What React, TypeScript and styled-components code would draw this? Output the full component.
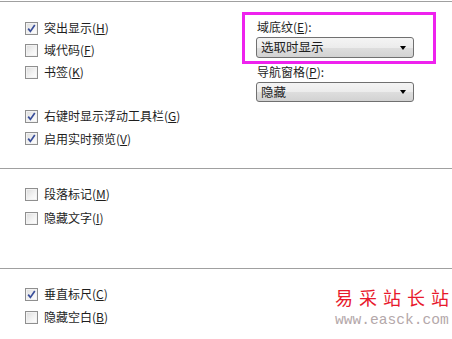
import { createGlobalStyle, styled } from "styled-components";

const GlobalStyle = createGlobalStyle`
  html, body {
    margin: 0;
    padding: 0;
    background: #ffffff;
  }
  body {
    font-family: "Noto Sans CJK SC", "Liberation Sans", sans-serif;
    font-size: 12px;
    color: #1e1e1e;
  }
`;

const Page = styled.div`
  position: relative;
  width: 452px;
  height: 339px;
  overflow: hidden;
  background: #fff;
  padding-top: 1px;
  box-sizing: border-box;
`;

const Section = styled.div<{ $height: number; $top: number }>`
  border-top: 1px solid #a0a0a0;
  height: ${(p) => p.$height}px;
  box-sizing: border-box;
  padding-top: ${(p) => p.$top}px;
  padding-left: 25px;
  display: flex;
`;

const Column = styled.div<{ $width?: number }>`
  display: flex;
  flex-direction: column;
  width: ${(p) => (p.$width ? `${p.$width}px` : "auto")};
`;

const Row = styled.label<{ $height?: number }>`
  display: flex;
  align-items: center;
  height: ${(p) => p.$height ?? 22}px;
  gap: 6px;
  white-space: nowrap;
  line-height: 1;
`;

const Spacer = styled.div<{ $h: number }>`
  height: ${(p) => p.$h}px;
`;

const Box = styled.span`
  width: 11px;
  height: 11px;
  border: 1px solid #8f8f8f;
  background: linear-gradient(135deg, #dcdcdc 0%, #f4f4f4 60%, #ffffff 100%);
  box-shadow: inset 0 0 0 1px #f2f2f2;
  display: flex;
  align-items: center;
  justify-content: center;
  flex-shrink: 0;
`;

const Key = styled.span`
  text-decoration: underline;
  text-underline-offset: 1px;
`;

const Right = styled.div`
  display: flex;
  flex-direction: column;
`;

const FieldLabel = styled.div`
  height: 20px;
  display: flex;
  align-items: center;
  padding-left: 1px;
  line-height: 1;
`;

const Select = styled.div<{ $h: number }>`
  width: 158px;
  height: ${(p) => p.$h}px;
  box-sizing: border-box;
  border: 1px solid #707070;
  border-radius: 3px;
  background: linear-gradient(#f4f4f4 0%, #ececec 50%, #dedede 51%, #d2d2d2 100%);
  display: flex;
  align-items: center;
  justify-content: space-between;
  padding: 0 7px 0 4px;
  font-size: 12.5px;
  line-height: 1;
`;

const Arrow = styled.span`
  width: 0;
  height: 0;
  border-left: 3.5px solid transparent;
  border-right: 3.5px solid transparent;
  border-top: 4px solid #000;
`;

const Highlight = styled.div`
  position: absolute;
  left: 242px;
  top: 12px;
  width: 194px;
  height: 52px;
  box-sizing: border-box;
  border: 3px solid #ee22ee;
  pointer-events: none;
`;

const Watermark = styled.div`
  position: absolute;
  left: 335px;
  top: 284px;
  width: 117px;
  display: flex;
  flex-direction: column;
  align-items: flex-start;
`;

const MarkTitle = styled.div`
  color: #e8192c;
  font-family: "Noto Sans CJK SC", serif;
  font-size: 18px;
  line-height: 26px;
  white-space: nowrap;
  display: flex;
  gap: 6px;
`;

const MarkUrl = styled.div`
  color: #b4a8aa;
  font-family: "Liberation Mono", monospace;
  font-size: 14.6px;
  line-height: 16px;
  white-space: nowrap;
  margin-top: 2px;
`;

const Tick = () => (
  <svg width="9" height="9" viewBox="0 0 9 9">
    <path d="M1.2 4.6 L3.4 7.4 L7.8 1" fill="none" stroke="#3a4f9a" strokeWidth="1.7" />
  </svg>
);

function Check({
  checked,
  label,
  k,
  h,
}: {
  checked?: boolean;
  label: string;
  k: string;
  h?: number;
}) {
  return (
    <Row $height={h}>
      <Box>{checked && <Tick />}</Box>
      <span>
        {label}(<Key>{k}</Key>)
      </span>
    </Row>
  );
}

export default function App() {
  return (
    <>
      <GlobalStyle />
      <Page>
        <Section $height={167} $top={15}>
          <Column $width={231}>
            <Check checked label="突出显示" k="H" />
            <Check label="域代码" k="F" />
            <Check label="书签" k="K" />
            <Spacer $h={22} />
            <Check checked label="右键时显示浮动工具栏" k="G" />
            <Check checked label="启用实时预览" k="V" h={23} />
          </Column>
          <Right>
            <FieldLabel>
              域底纹(<Key>E</Key>):
            </FieldLabel>
            <Select $h={21}>
              <span>选取时显示</span>
              <Arrow />
            </Select>
            <Spacer $h={4} />
            <FieldLabel>
              导航窗格(<Key>P</Key>):
            </FieldLabel>
            <Select $h={20}>
              <span>隐藏</span>
              <Arrow />
            </Select>
          </Right>
        </Section>
        <Section $height={100} $top={13}>
          <Column>
            <Check label="段落标记" k="M" h={24} />
            <Check label="隐藏文字" k="I" h={24} />
          </Column>
        </Section>
        <Section $height={71} $top={14}>
          <Column>
            <Check checked label="垂直标尺" k="C" />
            <Check label="隐藏空白" k="B" h={24} />
          </Column>
        </Section>
        <Highlight />
        <Watermark>
          <MarkTitle>
            <span>易</span>
            <span>采</span>
            <span>站</span>
            <span>长</span>
            <span>站</span>
          </MarkTitle>
          <MarkUrl>www.easck.com</MarkUrl>
        </Watermark>
      </Page>
    </>
  );
}
